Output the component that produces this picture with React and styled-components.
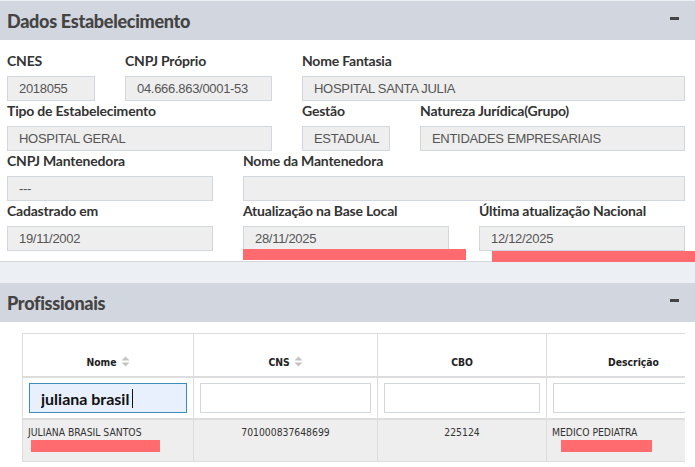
import React from "react";
import styled, { createGlobalStyle } from "styled-components";

const GlobalStyle = createGlobalStyle`
  html, body {
    margin: 0;
    padding: 0;
    background: #ffffff;
    overflow: hidden;
  }
  * {
    box-sizing: border-box;
  }
`;

const fields = [
  [
    { label: "CNES", value: "2018055", span: 2 },
    { label: "CNPJ Próprio", value: "04.666.863/0001-53", span: 3 },
    { label: "Nome Fantasia", value: "HOSPITAL SANTA JULIA", span: 7 },
  ],
  [
    { label: "Tipo de Estabelecimento", value: "HOSPITAL GERAL", span: 5 },
    { label: "Gestão", value: "ESTADUAL", span: 2 },
    { label: "Natureza Jurídica(Grupo)", value: "ENTIDADES EMPRESARIAIS", span: 5 },
  ],
  [
    { label: "CNPJ Mantenedora", value: "---", span: 4 },
    { label: "Nome da Mantenedora", value: "", span: 8 },
  ],
  [
    { label: "Cadastrado em", value: "19/11/2002", span: 4 },
    { label: "Atualização na Base Local", value: "28/11/2025", span: 4, mark: "local" },
    { label: "Última atualização Nacional", value: "12/12/2025", span: 4, mark: "nacional" },
  ],
];

const columns = [
  { title: "Nome", sort: true, width: 171 },
  { title: "CNS", sort: true, width: 184 },
  { title: "CBO", sort: false, width: 169 },
  { title: "Descrição", sort: false, width: 174 },
];

const SortIcon = () => (
  <svg width="9" height="11" viewBox="0 0 9 11" style={{ marginLeft: 4 }}>
    <path d="M4.5 0.5 L8.5 4.5 L0.5 4.5 Z" fill="#c4c4c4" />
    <path d="M4.5 10.5 L8.5 6.5 L0.5 6.5 Z" fill="#c4c4c4" />
  </svg>
);

const App = () => {
  return (
    <Page>
      <GlobalStyle />
      <Box>
        <BoxHeader>
          <BoxTitle>Dados Estabelecimento</BoxTitle>
          <Minus />
        </BoxHeader>
        <FormBody>
          {fields.map((row, i) => (
            <FormRow key={i}>
              {row.map((f) => (
                <Field key={f.label} span={f.span}>
                  <Label>{f.label}</Label>
                  <ReadOnly>{f.value}</ReadOnly>
                  {f.mark && <FieldMark variant={f.mark} />}
                </Field>
              ))}
            </FormRow>
          ))}
        </FormBody>
      </Box>
      <Gap />
      <Box>
        <BoxHeader>
          <BoxTitle>Profissionais</BoxTitle>
          <Minus />
        </BoxHeader>
        <TableBody>
          <TableScroll>
            <Table>
              <colgroup>
                {columns.map((c) => (
                  <col key={c.title} style={{ width: c.width }} />
                ))}
              </colgroup>
              <thead>
                <tr>
                  {columns.map((c) => (
                    <Th key={c.title}>
                      {c.title}
                      {c.sort && <SortIcon />}
                    </Th>
                  ))}
                </tr>
                <tr>
                  {columns.map((c, i) => (
                    <FilterCell key={c.title}>
                      {i === 0 ? (
                        <FilterWrap>
                          <FilterInput active defaultValue="juliana brasil" />
                          <Caret />
                        </FilterWrap>
                      ) : (
                        <FilterInput />
                      )}
                    </FilterCell>
                  ))}
                </tr>
              </thead>
              <tbody>
                <DataRow>
                  <Td>
                    JULIANA BRASIL SANTOS
                    <Redact w={129} ml={3} />
                  </Td>
                  <Td center>701000837648699</Td>
                  <Td center>225124</Td>
                  <Td>
                    MEDICO PEDIATRA
                    <Redact w={91} ml={9} />
                  </Td>
                </DataRow>
              </tbody>
            </Table>
          </TableScroll>
        </TableBody>
      </Box>
    </Page>
  );
};

const Page = styled.div`
  width: 695px;
  height: 467px;
  overflow: hidden;
  padding-top: 1px;
  background: #ecf0f5;
`;

const Box = styled.div`
  background: #ffffff;
  border-bottom: 1px solid #d2d6de;
`;

const BoxHeader = styled.div`
  height: 39px;
  background: #d2d6de;
  display: flex;
  align-items: center;
  justify-content: space-between;
  padding: 0 16px 0 7px;
`;

const BoxTitle = styled.h3`
  margin: 0;
  font-family: "Lato", "Noto Sans", sans-serif;
  font-weight: 900;
  font-size: 18px;
  color: #444444;
  letter-spacing: -0.3px;
`;

const Minus = styled.span`
  width: 9px;
  height: 3px;
  background: #444444;
  margin-bottom: 4px;
`;

const FormBody = styled.div`
  padding: 11px 10px 10px 7px;
`;

const FormRow = styled.div`
  display: grid;
  grid-template-columns: repeat(12, 29px);
  column-gap: 30px;
`;

const Field = styled.div`
  grid-column: span ${(p) => p.span};
  position: relative;
  display: flex;
  flex-direction: column;
`;

const Label = styled.label`
  font-family: "Lato", "Noto Sans", sans-serif;
  font-weight: 700;
  font-size: 14px;
  line-height: 20px;
  height: 20px;
  margin-bottom: 5px;
  color: #333333;
  letter-spacing: -0.2px;
  white-space: nowrap;
`;

const ReadOnly = styled.div`
  height: 25px;
  background: #eeeeee;
  border: 1px solid #d2d6de;
  padding: 0 11px;
  display: flex;
  align-items: center;
  font-family: "Liberation Sans", Arial, sans-serif;
  font-size: 13px;
  color: #555555;
  letter-spacing: -0.3px;
  white-space: nowrap;
`;

const FieldMark = styled.span`
  position: absolute;
  height: 11px;
  background: #ff6b6f;
  top: ${(p) => (p.variant === "local" ? "48px" : "50px")};
  left: ${(p) => (p.variant === "local" ? "0" : "13px")};
  width: ${(p) => (p.variant === "local" ? "223px" : "215px")};
`;

const Gap = styled.div`
  height: 21px;
  background: #ecf0f5;
`;

const TableBody = styled.div`
  padding: 11px 10px 0 22px;
  height: 145px;
  background: #ffffff;
`;

const TableScroll = styled.div`
  overflow: hidden;
  width: 663px;
`;

const Table = styled.table`
  border-collapse: collapse;
  table-layout: fixed;
  width: 698px;
  font-family: "DejaVu Sans Condensed", "DejaVu Sans", sans-serif;
  font-size: 10.3px;
  color: #333333;
`;

const Th = styled.th`
  height: 43px;
  border: 1px solid #dddddd;
  border-bottom: 2px solid #dddddd;
  vertical-align: bottom;
  text-align: center;
  padding: 0 6px 8px;
  font-weight: 700;
  color: #222222;
  white-space: nowrap;

  svg {
    vertical-align: -1px;
  }
`;

const FilterCell = styled.th`
  border: 1px solid #dddddd;
  border-bottom: 2px solid #dddddd;
  padding: 5px 6px 5px;
  height: 42px;
  vertical-align: top;
`;

const FilterWrap = styled.div`
  position: relative;
`;

const FilterInput = styled.input`
  display: block;
  width: 100%;
  height: 30px;
  border: 1px solid ${(p) => (p.active ? "#3c8dbc" : "#d2d6de")};
  background: ${(p) => (p.active ? "#e8f0fe" : "#ffffff")};
  padding: 2px 11px 0;
  font-family: "Lato", "Noto Sans", sans-serif;
  font-weight: 700;
  font-size: 16px;
  color: #111111;
  outline: none;
`;

const Caret = styled.span`
  position: absolute;
  left: 103px;
  top: 6px;
  width: 1px;
  height: 19px;
  background: #111111;
`;

const DataRow = styled.tr`
  background: #eeeeee;
`;

const Td = styled.td`
  border: 1px solid #dddddd;
  height: 43px;
  vertical-align: top;
  padding: 6px 5px 0;
  text-align: ${(p) => (p.center ? "center" : "left")};
  white-space: nowrap;
`;

const Redact = styled.span`
  display: block;
  width: ${(p) => p.w}px;
  height: 12px;
  margin: 2px 0 0 ${(p) => p.ml}px;
  background: #ff6b6f;
`;

export default App;
